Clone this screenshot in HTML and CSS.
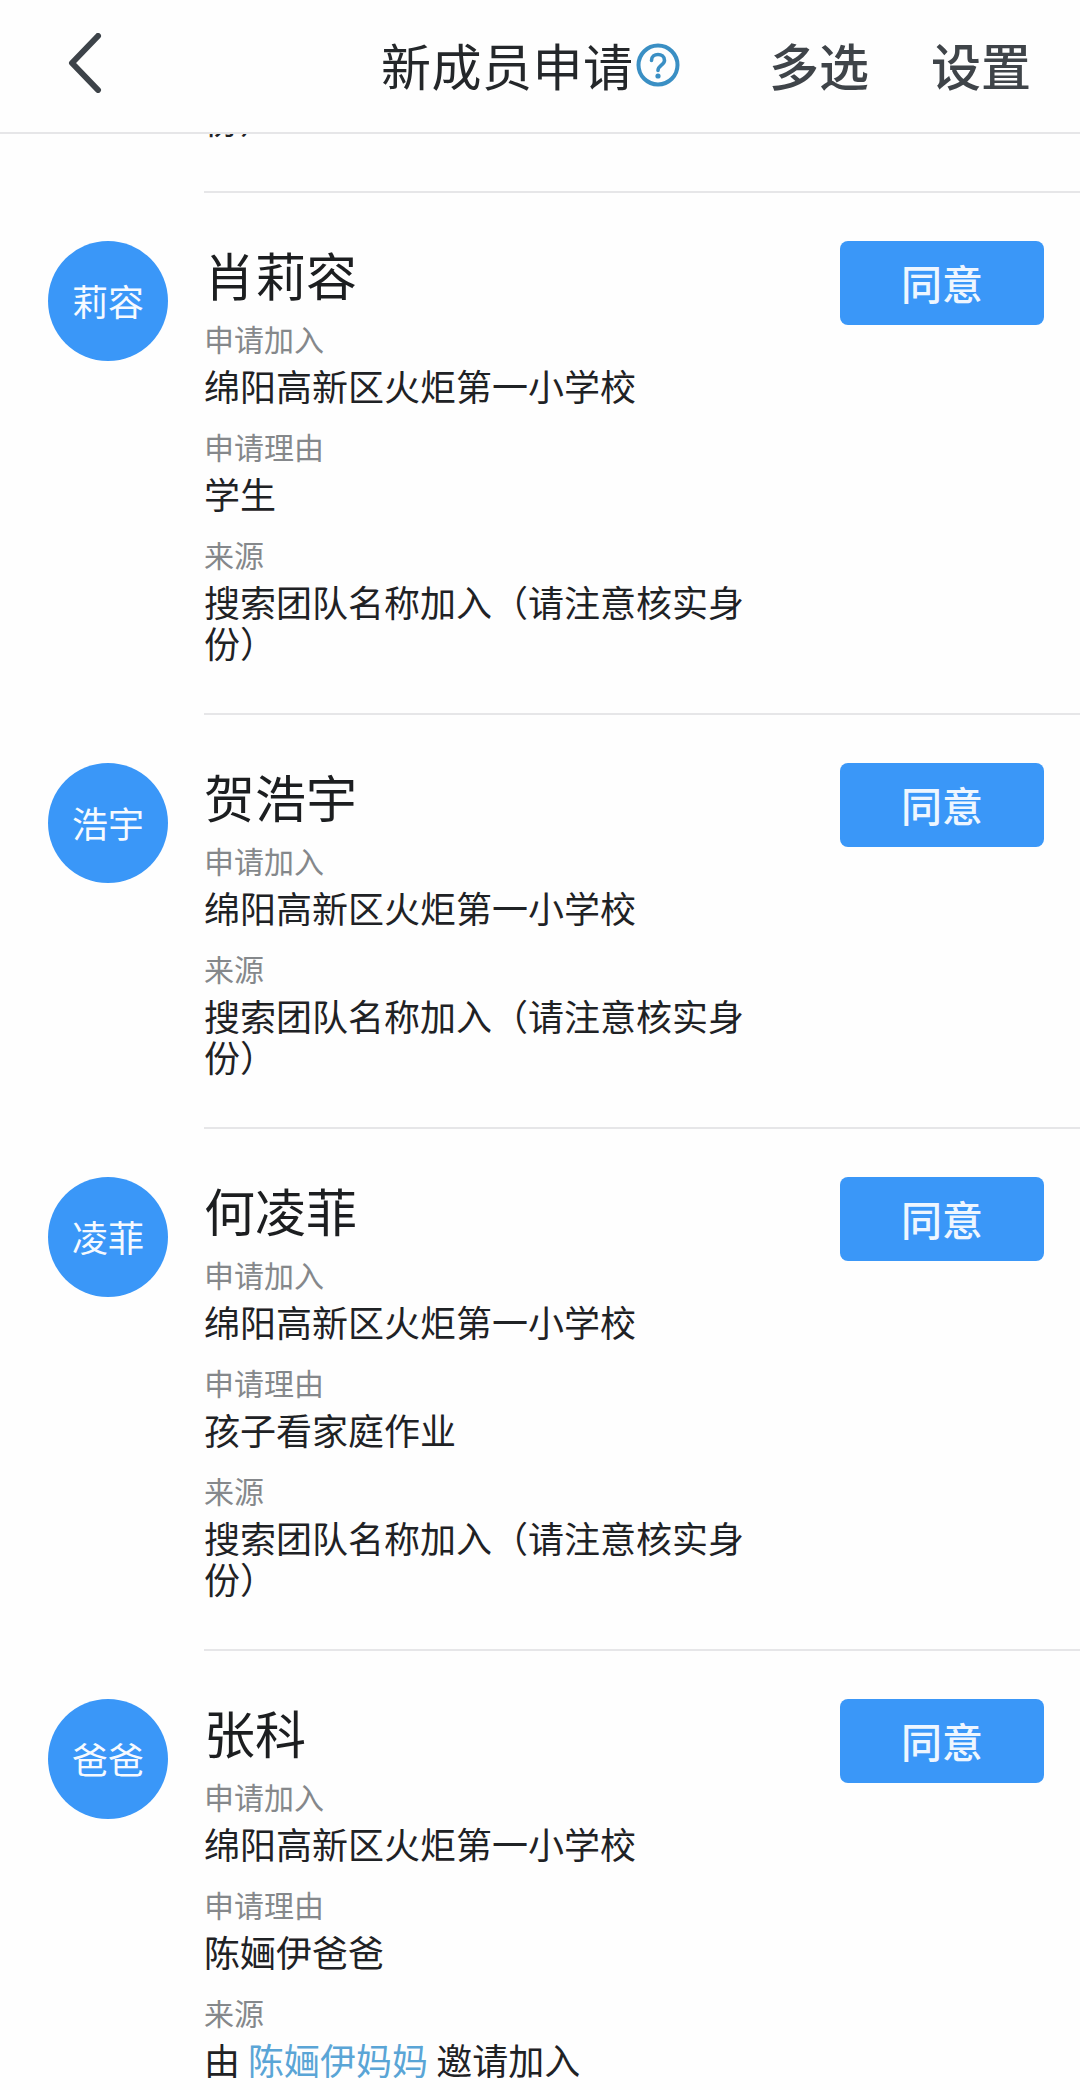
FILE: index.html
```html
<!DOCTYPE html>
<html lang="zh-CN">
<head>
<meta charset="utf-8">
<title>新成员申请</title>
<link rel="stylesheet" href="styles.css">
</head>
<body>
<header class="topbar">
  <svg class="back" viewBox="0 0 36 60" width="36" height="60"><path d="M32 3 L6 30 L32 57" fill="none" stroke="#3d4349" stroke-width="6" stroke-linecap="round" stroke-linejoin="round"/></svg>
  <div class="title-wrap">
    <span class="title">新成员申请</span>
    <svg class="help" viewBox="0 0 44 44" width="44" height="44"><circle cx="22" cy="22" r="19.5" fill="none" stroke="#3a8fc4" stroke-width="4"/><path d="M15.5 17.5 C15.5 9.5 28.5 9.5 28.5 17.5 C28.5 22 22 22.5 22 27.5" fill="none" stroke="#3a8fc4" stroke-width="3.6" stroke-linecap="round"/><circle cx="22" cy="33" r="2.6" fill="#3a8fc4"/></svg>
  </div>
  <div class="actions"><span>多选</span><span>设置</span></div>
</header>
<main>
  <div class="clipped"><p class="value clipped-text">份）</p></div>
  <section class="row">
    <div class="avatar">莉容</div>
    <div class="info">
      <h2 class="name">肖莉容</h2>
      <div class="field"><p class="label">申请加入</p><p class="value">绵阳高新区火炬第一小学校</p></div>
      <div class="field"><p class="label">申请理由</p><p class="value">学生</p></div>
      <div class="field"><p class="label">来源</p><p class="value">搜索团队名称加入（请注意核实身份）</p></div>
    </div>
    <button class="agree">同意</button>
  </section>
  <section class="row">
    <div class="avatar">浩宇</div>
    <div class="info">
      <h2 class="name">贺浩宇</h2>
      <div class="field"><p class="label">申请加入</p><p class="value">绵阳高新区火炬第一小学校</p></div>
      <div class="field"><p class="label">来源</p><p class="value">搜索团队名称加入（请注意核实身份）</p></div>
    </div>
    <button class="agree">同意</button>
  </section>
  <section class="row">
    <div class="avatar">凌菲</div>
    <div class="info">
      <h2 class="name">何凌菲</h2>
      <div class="field"><p class="label">申请加入</p><p class="value">绵阳高新区火炬第一小学校</p></div>
      <div class="field"><p class="label">申请理由</p><p class="value">孩子看家庭作业</p></div>
      <div class="field"><p class="label">来源</p><p class="value">搜索团队名称加入（请注意核实身份）</p></div>
    </div>
    <button class="agree">同意</button>
  </section>
  <section class="row">
    <div class="avatar">爸爸</div>
    <div class="info">
      <h2 class="name">张科</h2>
      <div class="field"><p class="label">申请加入</p><p class="value">绵阳高新区火炬第一小学校</p></div>
      <div class="field"><p class="label">申请理由</p><p class="value">陈婳伊爸爸</p></div>
      <div class="field"><p class="label">来源</p><p class="value">由 <span class="link">陈婳伊妈妈</span> 邀请加入</p></div>
    </div>
    <button class="agree">同意</button>
  </section>
</main>
</body>
</html>
```
FILE: styles.css
```css
* { box-sizing: border-box; }
html, body { margin: 0; padding: 0; }
body {
  width: 1080px;
  height: 2090px;
  overflow: hidden;
  background: #fefefe;
  font-family: "Noto Sans CJK SC", "Noto Sans", sans-serif;
  font-weight: 400;
  color: #1f2225;
}
p, h2 { margin: 0; font-weight: inherit; }
.topbar {
  height: 134px;
  border-bottom: 2px solid #e6e6e8;
  display: flex;
  align-items: center;
  padding: 0 49px 0 66px;
}
.back { flex: none; margin-top: -6px; }
.title-wrap {
  display: flex;
  align-items: center;
  gap: 2px;
  margin-left: 279px;
  margin-top: -4px;
}
.title { font-size: 50px; line-height: 60px; letter-spacing: 0.5px; color: #24272a; }
.help { margin-top: 1px; }
.actions {
  display: flex;
  gap: 62px;
  margin-left: auto;
  margin-top: -4px;
  font-size: 50px;
  line-height: 60px;
  font-weight: 500;
  color: #3f4449;
}
.clipped { height: 57px; overflow: hidden; margin-left: 204px; }
.row {
  display: flex;
  align-items: flex-start;
  margin-left: 204px;
  padding: 48px 36px 50px 0;
  border-top: 2px solid #e6e6e8;
}
.avatar {
  flex: none;
  width: 120px;
  height: 120px;
  margin-left: -156px;
  border-radius: 50%;
  background: #3a97f8;
  color: #f6faff;
  font-size: 36px;
  display: flex;
  align-items: center;
  justify-content: center;
  padding-bottom: 3px;
}
.info { flex: 1; min-width: 0; margin-left: 36px; padding-right: 60px; }
.name { font-size: 51px; line-height: 66px; color: #1c1e20; margin-bottom: 11px; }
.field + .field { margin-top: 20px; }
.label { font-size: 30px; line-height: 40px; color: #85888b; }
.value { font-size: 36px; line-height: 41px; margin-top: 7px; max-width: 560px; color: #1f2225; }
.value.clipped-text { margin-top: -36px; }
.link { color: #5aa5d6; }
.agree {
  flex: none;
  width: 204px;
  height: 84px;
  border: 0;
  border-radius: 8px;
  background: #3a97f8;
  color: #eef6ff;
  font-family: inherit;
  font-size: 41px;
  font-weight: 500;
  padding: 0 0 3px;
}
```
